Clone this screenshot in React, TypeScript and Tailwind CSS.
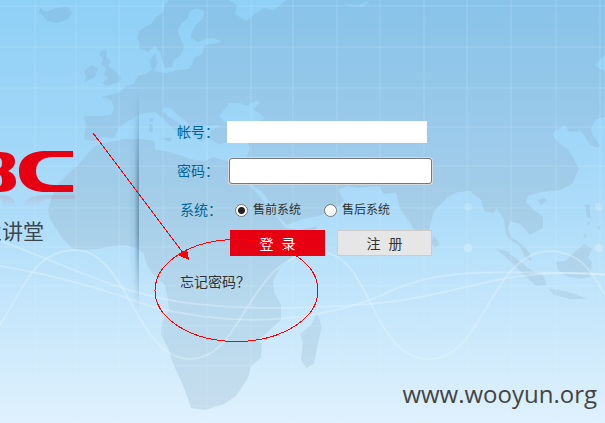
import type { ReactNode } from "react";

const verticals = [35, 76, 119, 163, 207, 251, 293, 337, 380, 424, 467, 511, 556, 600];
const horizontals = [6, 47, 88, 127, 166, 208, 247, 286, 326, 366, 406];

function WorldMap() {
  return (
    <svg
      className="absolute inset-0 h-full w-full"
      viewBox="0 0 605 423"
      preserveAspectRatio="xMinYMin slice"
      aria-hidden="true"
    >
      <defs>
        <linearGradient id="sea" gradientUnits="userSpaceOnUse" x1="0" y1="0" x2="0" y2="423">
          <stop offset="0" stopColor="#8fd0f6" />
          <stop offset="0.3" stopColor="#9fd6f8" />
          <stop offset="0.5" stopColor="#addcf9" />
          <stop offset="0.7" stopColor="#c2e5fb" />
          <stop offset="1" stopColor="#dff1fd" />
        </linearGradient>
        <linearGradient id="land" gradientUnits="userSpaceOnUse" x1="0" y1="0" x2="0" y2="423">
          <stop offset="0" stopColor="#88c3e9" />
          <stop offset="0.3" stopColor="#9acaeb" />
          <stop offset="0.48" stopColor="#a4cde8" />
          <stop offset="0.7" stopColor="#b6d8ed" />
          <stop offset="1" stopColor="#c8deee" />
        </linearGradient>
        <linearGradient id="fold" x1="0" y1="0" x2="1" y2="0">
          <stop offset="0" stopColor="#4f7f9f" stopOpacity="0" />
          <stop offset="0.5" stopColor="#4f7f9f" stopOpacity="0.1" />
          <stop offset="1" stopColor="#3f6b88" stopOpacity="0.6" />
        </linearGradient>
        <linearGradient id="fade" x1="0" y1="0" x2="0" y2="1">
          <stop offset="0" stopColor="#000" />
          <stop offset="0.4" stopColor="#fff" />
          <stop offset="0.65" stopColor="#fff" />
          <stop offset="1" stopColor="#000" />
        </linearGradient>
        <mask id="foldMask">
          <rect x="120" y="92" width="22" height="220" fill="url(#fade)" />
        </mask>
      </defs>
      <rect width="605" height="423" fill="url(#sea)" />
      <g fill="url(#land)">
        <path
          fillRule="evenodd"
          d="M169 0 L164 6 L163 12 L155 18 L152 23 L145 27 L139 31 L137 38 L140 43 L139 48 L148 52 L155 46 L160 52 L162 60 L165 68 L172 67 L174 60 L181 55 L184 46 L180 38 L178 30 L181 24 L188 18 L190 11 L197 8 L204 11 L203 18 L196 25 L192 31 L191 38 L198 42 L206 39 L214 38 L222 42 L205 45 L202 54 L194 58 L192 65 L188 69 L178 70 L166 73 L154 71 L158 63 L155 54 L149 60 L152 70 L145 74 L138 76 L133 84 L126 86 L120 92 L110 95 L101 97 L111 100 L114 108 L111 115 L98 116 L84 116 L86 126 L84 139 L93 141 L103 137 L114 138 L118 129 L125 123 L135 117 L141 114 L155 112 L162 117 L170 126 L177 132 L178 137 L184 131 L188 129 L176 121 L169 117 L162 110 L166 107 L172 109 L180 117 L187 122 L190 130 L195 138 L202 142 L206 137 L203 130 L207 126 L216 125 L220 126 L211 130 L209 138 L218 144 L232 142 L248 143 L250 149 L245 159 L236 162 L222 160 L214 157 L204 161 L190 159 L176 154 L165 151 L156 150 L154 141 L142 139 L125 139 L105 143 L95 146 L87 154 L79 164 L68 174 L58 184 L52 196 L48 210 L50 219 L55 227 L62 238 L72 248 L80 250 L98 249 L112 246 L126 245 L138 249 L144 254 L147 266 L154 275 L165 285 L168 300 L169 310 L162 322 L161 335 L168 348 L174 366 L183 385 L191 408 L205 410 L224 404 L236 396 L248 378 L251 366 L261 358 L262 345 L258 340 L270 330 L281 320 L281 305 L274 292 L273 280 L280 268 L298 252 L312 234 L318 226 L299 230 L285 228 L278 218 L268 206 L260 194 L250 186 L260 190 L267 200 L276 214 L287 225 L303 219 L318 216 L332 211 L344 201 L338 190 L347 186 L358 188 L378 186 L384 194 L396 193 L400 208 L412 226 L418 238 L427 240 L430 226 L434 211 L448 197 L458 192 L470 191 L481 200 L484 211 L493 213 L497 209 L504 219 L506 235 L510 240 L519 245 L526 259 L532 261 L529 252 L523 245 L512 238 L508 229 L510 221 L520 224 L530 235 L535 232 L543 228 L543 217 L533 209 L526 202 L528 196 L540 192 L560 190 L572 184 L579 169 L573 157 L568 149 L561 145 L553 136 L554 132 L565 125 L569 132 L580 131 L585 136 L590 145 L598 148 L600 145 L594 137 L591 129 L596 119 L605 117 V72 L595 65 L605 55 V0 Z
          M219 116 L230 103 L240 103 L247 106 L257 100 L260 103 L253 109 L265 118 L255 124 L240 121 L226 123 Z
          M228 0 L237 5 L235 14 L246 21 L255 14 L264 8 L274 10 L284 2 L286 0 Z
          M343 4 L360 5 L370 0 L363 7 L350 6 Z"
        />
        <path d="M40 8 L46 12 L56 8 L68 7 L72 13 L68 19 L57 23 L47 21 L43 16 L39 13 Z" />
        <path d="M101 51 L107 50 L106 57 L111 61 L108 66 L114 70 L121 77 L120 82 L107 86 L102 83 L108 78 L104 75 L106 68 L101 64 L103 58 L99 55 Z" />
        <path d="M91 65 L98 68 L95 77 L84 82 L86 77 L84 71 Z" />
        <path d="M317 313 L322 327 L318 343 L314 364 L306 368 L301 360 L303 342 L300 334 L311 325 Z" />
        <path d="M434 236 L440 244 L435 248 L431 243 Z" />
        <path d="M496 249 L506 251 L518 260 L531 270 L543 275 L547 285 L536 286 L523 274 L508 259 Z" />
        <path d="M549 289 L558 290 L568 292 L578 295 L587 299 L570 299 L554 295 Z" />
        <path d="M556 262 L565 261 L576 251 L584 244 L592 249 L588 258 L592 262 L590 277 L579 279 L566 276 L558 270 Z" />
        <path d="M585 204 L590 205 L590 216 L594 219 L587 217 Z" />
        <path d="M597 226 L601 227 L599 230 Z M583 236 L587 233 L585 238 Z M588 221 L590 224 L587 226 Z" />
        <path d="M538 200 L545 198 L547 201 L541 205 Z" />
      </g>
      <path d="M246 182 L255 187 L266 196 L274 208 L267 206 L259 196 Z" fill="#a9dbfa" opacity="0.7" />
      <g fill="#95c8ea">
        <circle cx="151" cy="120" r="2" />
        <ellipse cx="151" cy="128" rx="2" ry="4" />
        <path d="M162 138 L172 138 L170 142 Z" />
      </g>
      <g stroke="#dff4ff" strokeOpacity="0.11" strokeWidth="2">
        {verticals.map((x) => (
          <line key={x} x1={x} y1="0" x2={x} y2="423" />
        ))}
        {horizontals.map((y) => (
          <line key={y} x1="0" y1={y} x2="605" y2={y} />
        ))}
      </g>
      <g fill="none" stroke="#e6f6ff" strokeOpacity="0.36" strokeWidth="2">
        <path d="M0 325 C25 285 35 251 75 250 C128 250 135 359 190 359 C245 359 247 253 320 252 C373 253 369 359 430 359 C484 359 490 252 550 251 C582 252 593 274 605 295" />
        <path d="M0 241 C60 262 110 290 180 302 C250 312 350 308 410 299 C470 288 490 278 540 274 C570 272 590 273 605 275" />
        <path d="M0 266 C60 276 105 290 150 306 C240 330 320 320 380 296 C435 268 480 271 605 274" />
      </g>
      <circle cx="468" cy="248" r="4" fill="#d0ecfc" opacity="0.7" />
      <circle cx="599" cy="248" r="4" fill="#d0ecfc" opacity="0.7" />
      <circle cx="599" cy="207" r="4" fill="#d0ecfc" opacity="0.4" />
      <circle cx="468" cy="207" r="4" fill="#d0ecfc" opacity="0.4" />
      <rect x="129" y="92" width="10" height="220" fill="url(#fold)" mask="url(#foldMask)" />
    </svg>
  );
}

function BrandMark() {
  return (
    <svg className="block h-14 w-[76px]" viewBox="0 0 76 56" role="img" aria-label="H3C">
      <defs>
        <linearGradient id="mirror" x1="0" y1="0" x2="0" y2="1">
          <stop offset="0" stopColor="#c86f8e" stopOpacity="0.22" />
          <stop offset="1" stopColor="#c86f8e" stopOpacity="0" />
        </linearGradient>
      </defs>
      <g fill="#e60012">
        <path d="M73 0 H47 C29 0 19 7 19 20 C19 34 29 41 47 41 H73 V34 H54 C42 34 36 29 36 20 C36 11 42 6 54 6 H73 Z" />
        <path d="M0 1 C9 1 15 4 15 10 C15 15 12 18 8 20 C13 22 16 25 16 31 C16 37 10 41 0 41 V35 Q2 34 2 30 Q2 25 0 24 V17 Q2 16 2 12 Q2 8 0 7 Z" />
      </g>
      <g fill="url(#mirror)">
        <path d="M75 44 H46 C32 44 23 49 22 56 H36 C38 51 44 48 54 48 H75 Z" />
        <path d="M0 44 C9 44 16 47 16 56 H3 Q4 50 0 48 Z" />
      </g>
    </svg>
  );
}

function Row({ className, children }: { className: string; children: ReactNode }) {
  return <div className={`flex items-center ${className}`}>{children}</div>;
}

function SystemChoice({ id, label, checked }: { id: string; label: string; checked?: boolean }) {
  return (
    <div className="flex items-center gap-[5px]">
      <input
        id={id}
        type="radio"
        name="system"
        defaultChecked={checked}
        className="size-[13px] appearance-none rounded-full border border-[#777] bg-white checked:bg-[radial-gradient(circle,#222_0_3px,#fff_4px)]"
      />
      <label htmlFor={id} className="text-xs text-[#333]">
        {label}
      </label>
    </div>
  );
}

function Annotation() {
  return (
    <svg
      className="pointer-events-none absolute top-0 left-0 h-[423px] w-[605px]"
      viewBox="0 0 605 423"
      aria-hidden="true"
      shapeRendering="crispEdges"
    >
      <g fill="none" stroke="#ff0000" strokeWidth="1">
        <path d="M93 133 L184 254" />
        <ellipse cx="236.5" cy="290.5" rx="81.5" ry="51" />
      </g>
      <path d="M187 249 L178 255 L189 260 Z" fill="#ff0000" />
    </svg>
  );
}

export default function App() {
  return (
    <main className="relative flex min-h-screen flex-col overflow-hidden bg-[#dff1fd] font-['Liberation_Sans','Noto_Sans_CJK_SC',sans-serif]">
      <WorldMap />
      <div className="relative flex flex-1">
        <header className="w-[139px] shrink-0 pt-[151px]">
          <BrandMark />
          <div className="flex w-11 justify-end pt-[10px] text-[21px] leading-[30px] whitespace-nowrap text-[#3c4850]">
            业讲堂
          </div>
        </header>
        <form className="pt-[121px] pl-[38px]" onSubmit={(e) => e.preventDefault()}>
          <Row className="h-[22px]">
            <label htmlFor="account" className="w-[50px] text-sm whitespace-nowrap text-[#006699]">
              帐号：
            </label>
            <input id="account" type="text" className="h-[22px] w-[200px] bg-white px-1 text-sm outline-none" />
          </Row>
          <Row className="mt-[14px] h-7">
            <label htmlFor="password" className="w-[50px] text-sm whitespace-nowrap text-[#006699]">
              密码：
            </label>
            <input
              id="password"
              type="password"
              className="ml-[2px] h-[26px] w-[203px] rounded-[3px] border border-[#777] bg-white px-1 text-sm ring-1 ring-[#d5dade] outline-none"
            />
          </Row>
          <Row className="mt-[13px] h-6 pl-[3px]">
            <span className="w-[55px] text-sm whitespace-nowrap text-[#006699]">系统：</span>
            <div role="radiogroup" aria-label="系统" className="flex gap-[23px]">
              <SystemChoice id="presale" label="售前系统" checked />
              <SystemChoice id="aftersale" label="售后系统" />
            </div>
          </Row>
          <Row className="mt-2 gap-3 pl-[53px]">
            <button type="submit" className="h-[26px] w-[95px] bg-[#e60012] pt-[2px] text-sm whitespace-pre text-white">
              登  录
            </button>
            <button
              type="button"
              className="h-[26px] w-[95px] border border-[#ccc] bg-[#e6e6e6] pt-[2px] text-sm whitespace-pre text-[#333]"
            >
              注  册
            </button>
          </Row>
          <a href="#forgot" className="mt-4 ml-[3px] inline-block text-sm text-[#333]">
            忘记密码？
          </a>
        </form>
      </div>
      <footer className="relative pr-2 pb-3 text-right font-['Open_Sans','Noto_Sans',sans-serif] text-[24px] leading-[34px] text-[#444]">
        www.wooyun.org
      </footer>
      <Annotation />
    </main>
  );
}
